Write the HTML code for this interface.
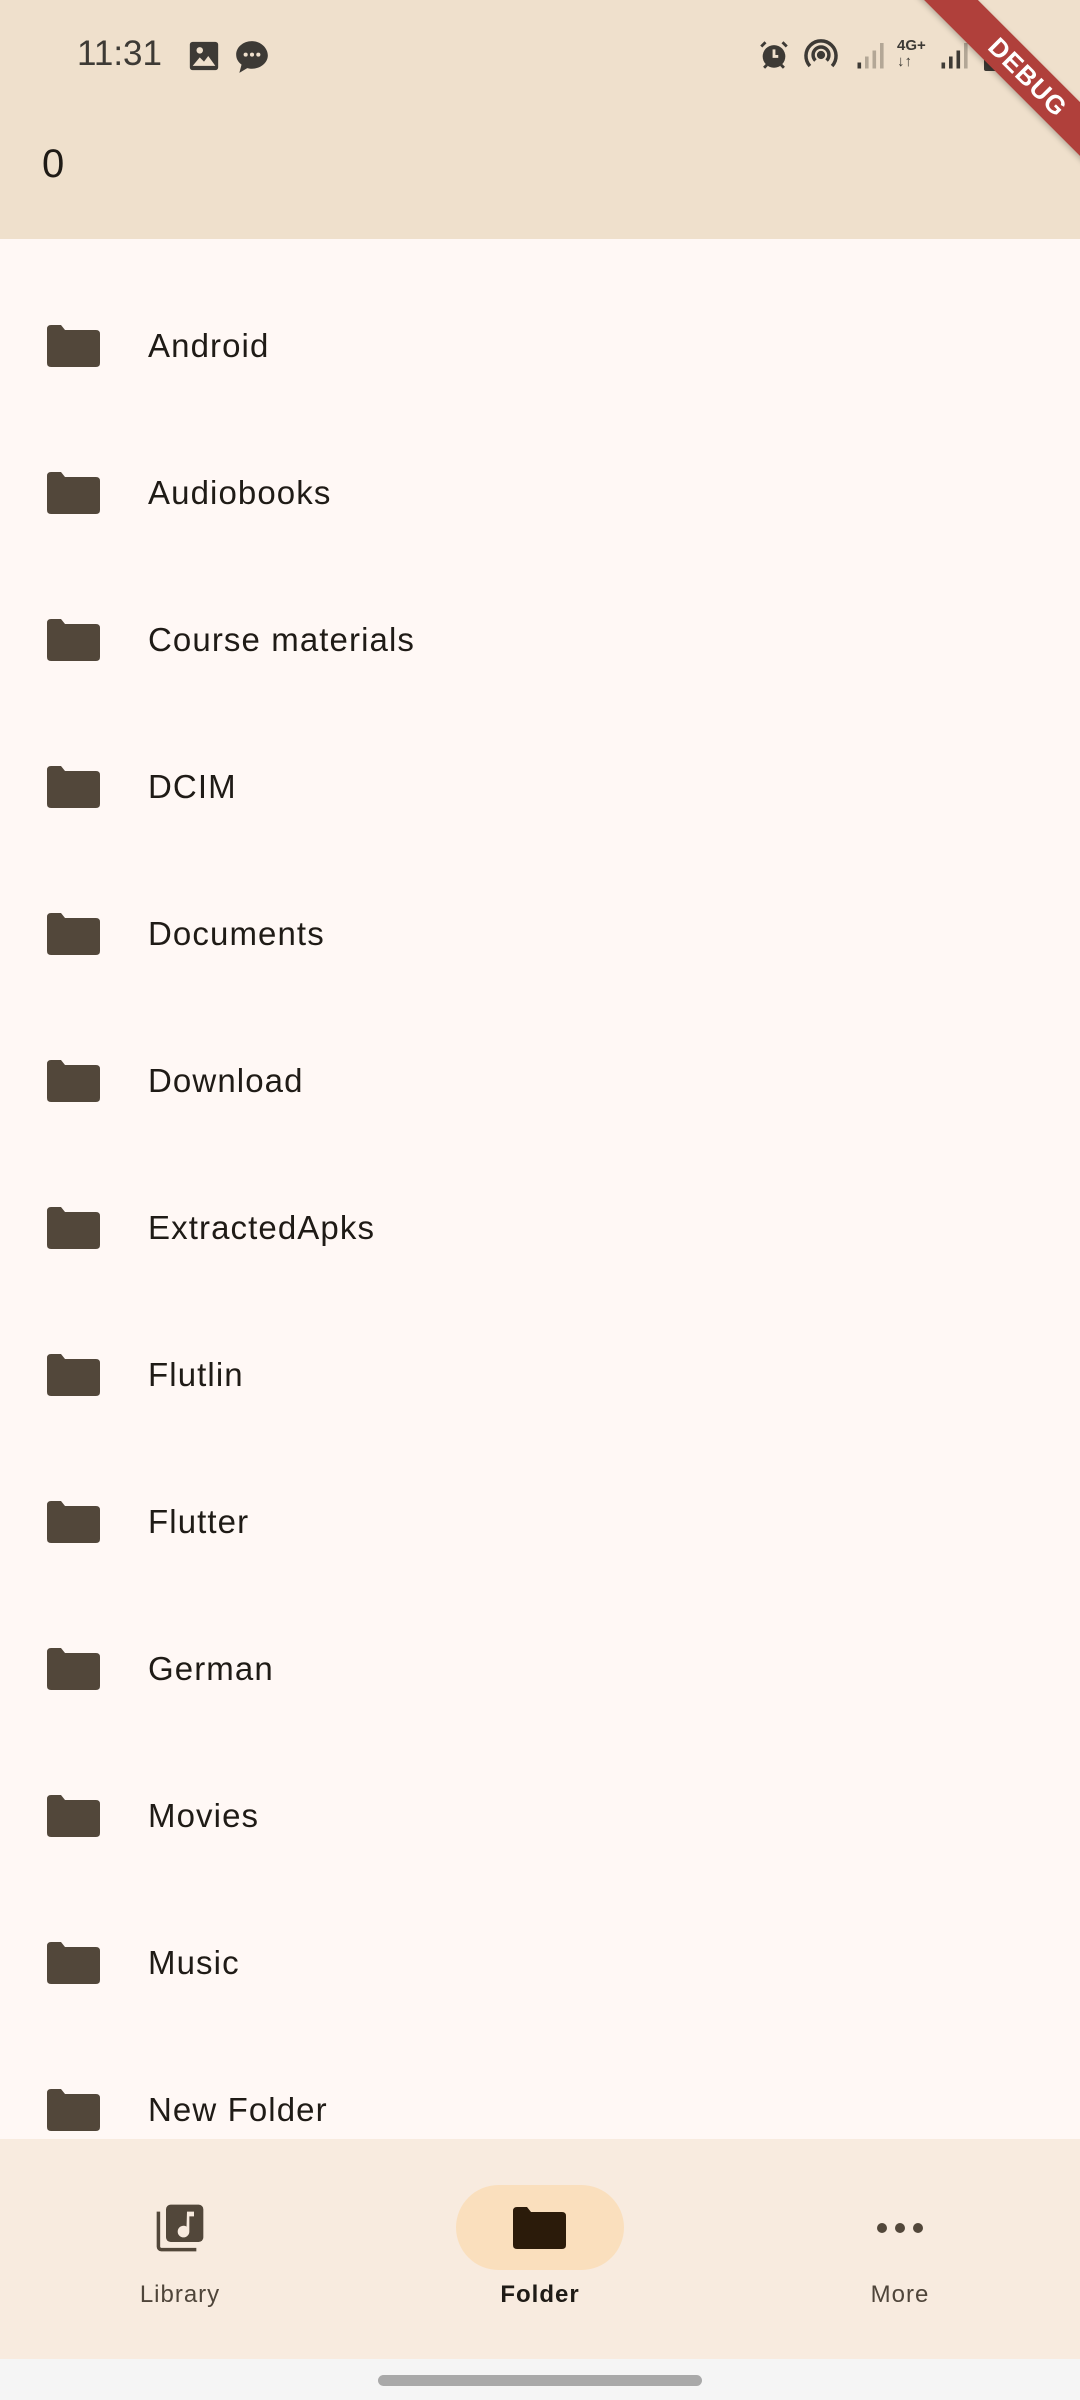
<!DOCTYPE html>
<html><head><meta charset="utf-8"><style>
*{margin:0;padding:0;box-sizing:border-box}
body{width:1080px;height:2400px;overflow:hidden;background:#fff8f5;font-family:"Liberation Sans",sans-serif;position:relative;color:#1f1b16}
.top{position:absolute;left:0;top:0;width:1080px;height:239px;background:#efe0cc}
.time{position:absolute;left:77px;top:34px;font-size:35px;color:#3d3a35;letter-spacing:0}
.zero{position:absolute;left:42px;top:142px;font-size:40px;color:#1f1b16}
.row{position:absolute;left:0;width:1080px;height:147px}
.row svg{position:absolute;left:47px;top:54px}
.row span{position:absolute;left:148px;top:56px;font-size:33px;letter-spacing:1.1px;color:#1f1b16}
.nav{position:absolute;left:0;top:2139px;width:1080px;height:220px;background:#f8ebdf}
.gest{position:absolute;left:0;top:2359px;width:1080px;height:41px;background:#f5f5f5}
.handle{position:absolute;left:378px;top:2375px;width:324px;height:11px;border-radius:6px;background:#a9a9a9}
.lbl{position:absolute;top:2281px;width:200px;text-align:center;font-size:24px;letter-spacing:1px;color:#4f453a}
.pill{position:absolute;left:456px;top:2185px;width:168px;height:85px;border-radius:43px;background:#fadfbd}
.banner{position:absolute;left:868px;top:58px;width:320px;height:38px;background:#b0403b;transform:rotate(45deg);color:#fff;font-weight:bold;font-size:26px;text-align:center;line-height:38px;letter-spacing:1px;box-shadow:0 2px 6px rgba(0,0,0,.25)}
</style></head><body>
<div class="top"></div>
<div class="time">11:31</div>
<svg style="position:absolute;left:187px;top:39px" width="34" height="34" viewBox="0 0 24 24"><rect x="2" y="2" width="20" height="20" rx="2" fill="#3d3a35"/><circle cx="9" cy="8" r="2.3" fill="#efe0cc"/><path d="M4 19l5-6 3 3 3-4 5 7z" fill="#efe0cc"/></svg>
<svg style="position:absolute;left:233px;top:38px" width="38" height="38" viewBox="0 0 24 24"><path d="M12 2C6.5 2 2 5.8 2 10.5c0 2.6 1.3 4.8 3.4 6.3L4 22l5-3c1 .3 2 .4 3 .4 5.5 0 10-3.8 10-8.4S17.5 2 12 2z" fill="#3d3a35"/><circle cx="8" cy="10.5" r="1.3" fill="#efe0cc"/><circle cx="12" cy="10.5" r="1.3" fill="#efe0cc"/><circle cx="16" cy="10.5" r="1.3" fill="#efe0cc"/></svg>
<svg style="position:absolute;left:757px;top:38px" width="34" height="34" viewBox="0 0 24 24"><circle cx="12" cy="13" r="8" fill="#3d3a35"/><path d="M12 8v5h3" stroke="#efe0cc" stroke-width="2" fill="none"/><path d="M3 6l3-3M21 6l-3-3M5 21l2-2M19 21l-2-2" stroke="#3d3a35" stroke-width="2"/></svg>
<svg style="position:absolute;left:802px;top:36px" width="38" height="38" viewBox="0 0 24 24" fill="none" stroke="#3d3a35" stroke-width="2.2"><path d="M5 19A9.5 9.5 0 1 1 19 19"/><path d="M8.5 15.5a5 5 0 1 1 7 0"/><circle cx="12" cy="12" r="1.5" fill="#3d3a35"/></svg>
<svg style="position:absolute;left:856px;top:40px" width="30" height="30" viewBox="0 0 20 20"><rect x="1" y="15" width="2.4" height="4" fill="#3d3a35"/><rect x="6" y="11" width="2.4" height="8" fill="#b3a796"/><rect x="11" y="7" width="2.4" height="12" fill="#b3a796"/><rect x="16" y="2" width="2.4" height="17" fill="#b3a796"/></svg>
<div style="position:absolute;left:897px;top:38px;font-size:15px;font-weight:bold;color:#3d3a35;line-height:16px">4G+<br>&#8595;&#8593;</div>
<svg style="position:absolute;left:940px;top:40px" width="30" height="30" viewBox="0 0 20 20"><rect x="1" y="15" width="2.4" height="4" fill="#3d3a35"/><rect x="6" y="11" width="2.4" height="8" fill="#3d3a35"/><rect x="11" y="7" width="2.4" height="12" fill="#3d3a35"/><rect x="16" y="2" width="2.4" height="17" fill="#b3a796"/></svg>
<div style="position:absolute;left:984px;top:49px;width:20px;height:22px;background:#3d3a35;border-radius:2px"></div>
<div class="zero">0</div>

<div class="row" style="top:271px"><svg width="53" height="42" viewBox="0 0 53 42"><path d="M0 4Q0 0 4 0H14L18 5H49Q53 5 53 9V38Q53 42 49 42H4Q0 42 0 38Z" fill="#52473a"/></svg><span>Android</span></div>
<div class="row" style="top:418px"><svg width="53" height="42" viewBox="0 0 53 42"><path d="M0 4Q0 0 4 0H14L18 5H49Q53 5 53 9V38Q53 42 49 42H4Q0 42 0 38Z" fill="#52473a"/></svg><span>Audiobooks</span></div>
<div class="row" style="top:565px"><svg width="53" height="42" viewBox="0 0 53 42"><path d="M0 4Q0 0 4 0H14L18 5H49Q53 5 53 9V38Q53 42 49 42H4Q0 42 0 38Z" fill="#52473a"/></svg><span>Course materials</span></div>
<div class="row" style="top:712px"><svg width="53" height="42" viewBox="0 0 53 42"><path d="M0 4Q0 0 4 0H14L18 5H49Q53 5 53 9V38Q53 42 49 42H4Q0 42 0 38Z" fill="#52473a"/></svg><span>DCIM</span></div>
<div class="row" style="top:859px"><svg width="53" height="42" viewBox="0 0 53 42"><path d="M0 4Q0 0 4 0H14L18 5H49Q53 5 53 9V38Q53 42 49 42H4Q0 42 0 38Z" fill="#52473a"/></svg><span>Documents</span></div>
<div class="row" style="top:1006px"><svg width="53" height="42" viewBox="0 0 53 42"><path d="M0 4Q0 0 4 0H14L18 5H49Q53 5 53 9V38Q53 42 49 42H4Q0 42 0 38Z" fill="#52473a"/></svg><span>Download</span></div>
<div class="row" style="top:1153px"><svg width="53" height="42" viewBox="0 0 53 42"><path d="M0 4Q0 0 4 0H14L18 5H49Q53 5 53 9V38Q53 42 49 42H4Q0 42 0 38Z" fill="#52473a"/></svg><span>ExtractedApks</span></div>
<div class="row" style="top:1300px"><svg width="53" height="42" viewBox="0 0 53 42"><path d="M0 4Q0 0 4 0H14L18 5H49Q53 5 53 9V38Q53 42 49 42H4Q0 42 0 38Z" fill="#52473a"/></svg><span>Flutlin</span></div>
<div class="row" style="top:1447px"><svg width="53" height="42" viewBox="0 0 53 42"><path d="M0 4Q0 0 4 0H14L18 5H49Q53 5 53 9V38Q53 42 49 42H4Q0 42 0 38Z" fill="#52473a"/></svg><span>Flutter</span></div>
<div class="row" style="top:1594px"><svg width="53" height="42" viewBox="0 0 53 42"><path d="M0 4Q0 0 4 0H14L18 5H49Q53 5 53 9V38Q53 42 49 42H4Q0 42 0 38Z" fill="#52473a"/></svg><span>German</span></div>
<div class="row" style="top:1741px"><svg width="53" height="42" viewBox="0 0 53 42"><path d="M0 4Q0 0 4 0H14L18 5H49Q53 5 53 9V38Q53 42 49 42H4Q0 42 0 38Z" fill="#52473a"/></svg><span>Movies</span></div>
<div class="row" style="top:1888px"><svg width="53" height="42" viewBox="0 0 53 42"><path d="M0 4Q0 0 4 0H14L18 5H49Q53 5 53 9V38Q53 42 49 42H4Q0 42 0 38Z" fill="#52473a"/></svg><span>Music</span></div>
<div class="row" style="top:2035px"><svg width="53" height="42" viewBox="0 0 53 42"><path d="M0 4Q0 0 4 0H14L18 5H49Q53 5 53 9V38Q53 42 49 42H4Q0 42 0 38Z" fill="#52473a"/></svg><span>New Folder</span></div>

<div class="nav"></div>
<div class="pill"></div>
<svg style="position:absolute;left:152px;top:2200px" width="56" height="56" viewBox="0 0 24 24"><path d="M2 5v15a2 2 0 0 0 2 2h15v-1.5H4a.5.5 0 0 1-.5-.5V5z" fill="#52473a"/><rect x="6" y="2" width="16" height="16" rx="2" fill="#52473a"/><path d="M15 5h3v2h-2v6.5a2.5 2.5 0 1 1-1.2-2.1z" fill="#f8ebdf"/></svg>
<svg style="position:absolute;left:513px;top:2207px" width="53" height="42" viewBox="0 0 53 42"><path d="M0 4Q0 0 4 0H14L18 5H49Q53 5 53 9V38Q53 42 49 42H4Q0 42 0 38Z" fill="#2b1b0a"/></svg>
<svg style="position:absolute;left:876px;top:2216px" width="48" height="24" viewBox="0 0 48 24"><circle cx="6" cy="12" r="5" fill="#52473a"/><circle cx="24" cy="12" r="5" fill="#52473a"/><circle cx="42" cy="12" r="5" fill="#52473a"/></svg>
<div class="lbl" style="left:80px">Library</div>
<div class="lbl" style="left:440px;color:#1f1b16;font-weight:bold">Folder</div>
<div class="lbl" style="left:800px">More</div>
<div class="gest"></div><div class="handle"></div>
<div class="banner">DEBUG</div>
</body></html>
